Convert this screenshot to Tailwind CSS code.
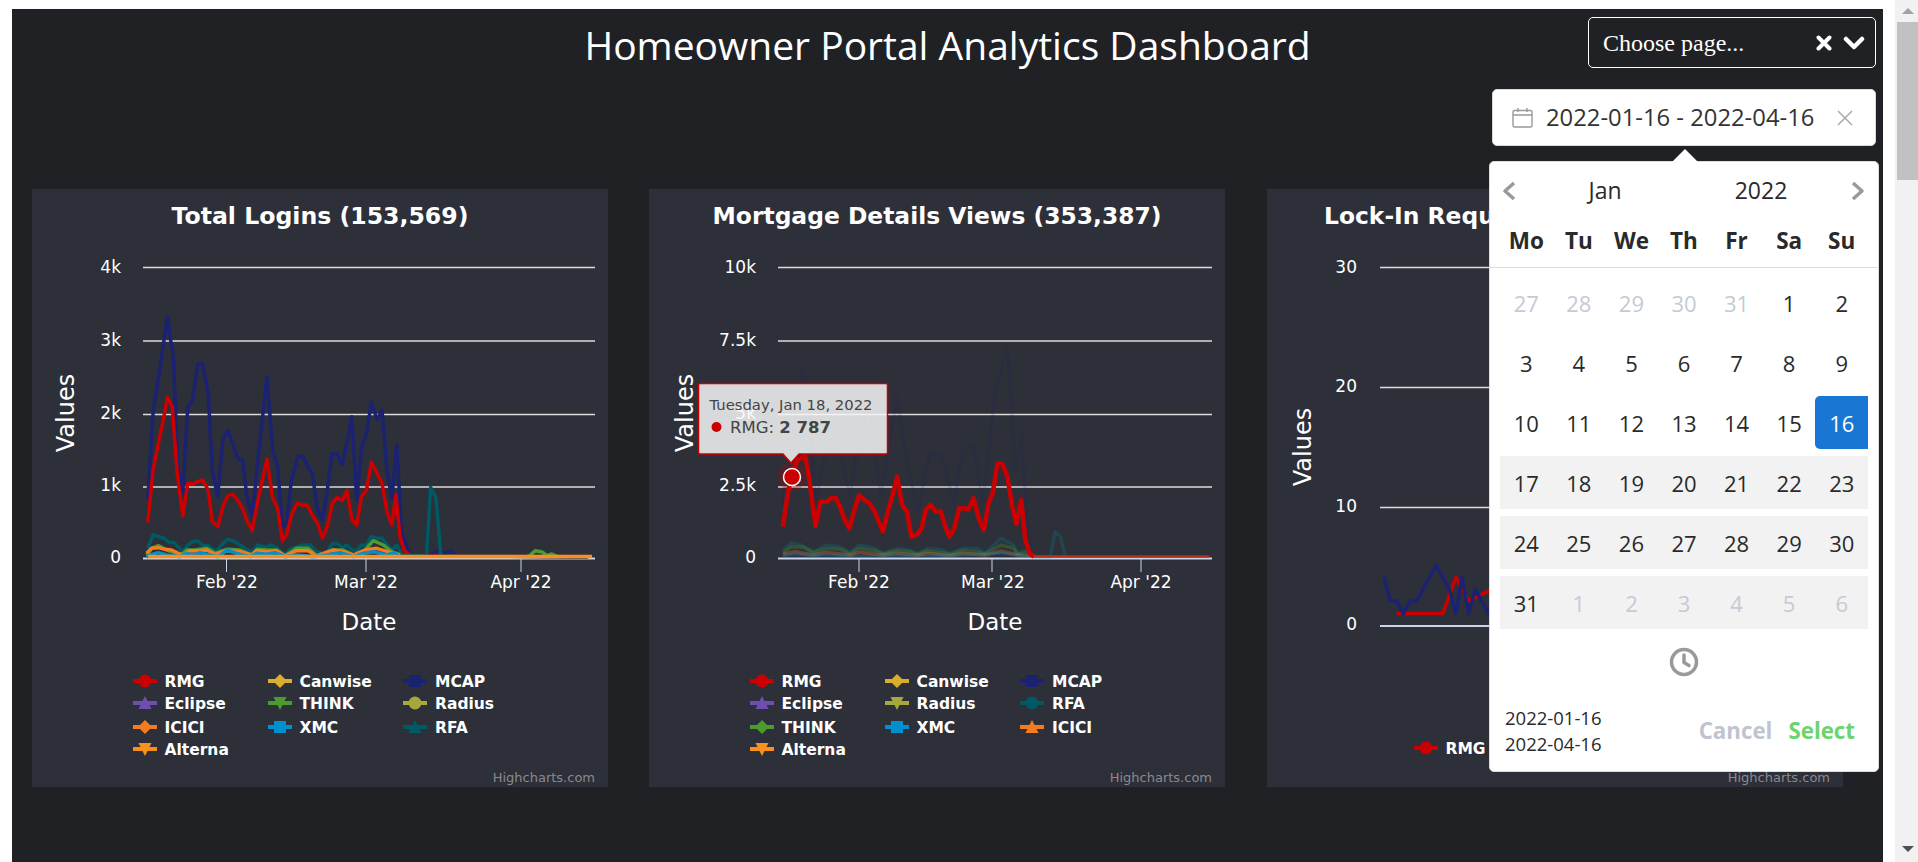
<!DOCTYPE html>
<html lang="en">
<head>
<meta charset="utf-8">
<title>Homeowner Portal Analytics Dashboard</title>
<script src="https://cdn.jsdelivr.net/npm/@tailwindcss/browser@4"></script>
</head>
<body class="overflow-hidden bg-white">
<div class="flex h-[862px] w-[1918px] overflow-hidden bg-white">
  <main class="relative mt-[9px] ml-[12px] h-[853px] w-[1871px] shrink-0 bg-[#202125]">
    <header class="grid h-[59px] grid-cols-[1fr_auto_1fr] items-start pt-[8px] pr-[7px] pl-[7px]">
      <div></div>
      <h1 class="mt-[3px] font-['Open_Sans',sans-serif] text-[39px] leading-[50px] font-normal text-white">Homeowner Portal Analytics Dashboard</h1>
      <div class="flex justify-end">
        <div class="flex h-[51px] w-[288px] items-center justify-between rounded-[5px] border border-white pr-[10px] pl-[14px] font-['Liberation_Serif',serif] text-[24px] text-white">
          <span>Choose page...</span>
          <span class="flex items-center gap-[11px]">
            <svg width="16" height="16" viewBox="0 0 16 16" fill="none" stroke="#fff" stroke-width="4" stroke-linecap="round"><path d="M2.5 2.5 13.5 13.5M13.5 2.5 2.5 13.5"/></svg>
            <svg width="22" height="16" viewBox="0 0 22 16" fill="none" stroke="#fff" stroke-width="4.5" stroke-linecap="round" stroke-linejoin="round"><path d="M3 4l8 8 8-8"/></svg>
          </span>
        </div>
      </div>
    </header>

    <div class="mt-[21px] flex justify-end pr-[7px]">
      <div class="flex h-[57px] w-[384px] items-center rounded-[5px] border border-[#d9d9d9] bg-white pl-[19px] font-['Open_Sans',sans-serif] text-[#333]">
        <svg width="21" height="21" viewBox="0 0 21 21" fill="none" stroke="#999" stroke-width="1.4"><rect x="1" y="3.5" width="19" height="16.5" rx="1.5"/><path d="M1 8h19M6 1v4M15 1v4"/></svg>
        <span class="ml-[13px] w-[267px] text-[23.8px] leading-none whitespace-nowrap">2022-01-16 - 2022-04-16</span>
        <svg class="ml-[24px]" width="16" height="16" viewBox="0 0 16 16" fill="none" stroke="#aaa" stroke-width="1.5"><path d="M1 1l14 14M15 1 1 15"/></svg>
      </div>
    </div>

    <section class="mt-[43px] flex gap-[41px] pl-[20px] font-['DejaVu_Sans',sans-serif]">
      <!-- Chart 1 -->
      <article class="h-[598px] w-[576px] shrink-0 bg-[#2d2f39]">
        <svg class="block" width="576" height="598" viewBox="32 189 576 598" fill="none">
          <defs>
            <circle id="m-circle" r="6.5"/>
            <rect id="m-square" x="-6" y="-6" width="12" height="12"/>
            <path id="m-diamond" d="M0-7 7 0 0 7-7 0Z"/>
            <path id="m-up" d="M0-7 6.5 6H-6.5Z"/>
            <path id="m-down" d="M0 7 6.5-6H-6.5Z"/>
          </defs>
          <text x="320" y="224" text-anchor="middle" class="fill-white text-[23.6px] font-bold">Total Logins (153,569)</text>
          <g stroke="#dcdcdc" stroke-width="1.5">
            <path d="M143 267.5H595M143 341H595M143 414.5H595M143 487H595"/>
          </g>
          <path d="M143 558.5H595" stroke="#ccd6eb" stroke-width="2"/>
          <path d="M226.5 558V572M366 558V572M521 558V572" stroke="#ccd6eb"/>
          <g class="fill-white text-[17px]" text-anchor="end">
            <text x="121" y="273">4k</text><text x="121" y="346">3k</text><text x="121" y="419">2k</text><text x="121" y="491">1k</text><text x="121" y="563">0</text>
          </g>
          <g class="fill-white text-[17px]" text-anchor="middle">
            <text x="227" y="588">Feb '22</text><text x="366" y="588">Mar '22</text><text x="521" y="588">Apr '22</text>
          </g>
          <text transform="translate(74 413) rotate(-90)" text-anchor="middle" class="fill-white text-[24px]">Values</text>
          <text x="369" y="630" text-anchor="middle" class="fill-white text-[23px]">Date</text>

          <g transform="translate(0 170) scale(.40816 .33333)" stroke-linejoin="round">
            <polyline vector-effect="non-scaling-stroke" stroke="#1c2272" stroke-width="3.5" points="362,990 375,730 390,610 410,440 425,570 436,900 448,970 460,710 472,690 484,585 496,580 510,670 520,900 533,980 546,810 558,782 570,820 582,865 594,870 606,990 618,1040 632,870 654,620 668,840 680,890 692,1070 702,1060 714,930 730,860 742,858 752,885 765,910 778,1020 790,1050 802,960 814,850 826,852 838,885 850,820 862,740 874,990 886,830 898,790 910,697 924,750 936,720 948,900 960,985 972,825 984,1090 1000,1140 1012,1158 1050,1158 1075,1140 1090,1150 1105,1143 1120,1158 1440,1160"/>
            <polyline vector-effect="non-scaling-stroke" stroke="#cc0000" stroke-width="3.5" points="362,1058 375,900 388,820 400,750 410,683 422,710 434,910 448,1037 460,940 472,942 484,935 496,930 510,960 520,1055 534,1070 546,1010 558,978 570,972 582,990 594,1015 606,1055 618,1082 632,990 654,868 668,985 680,1015 692,1112 702,1095 714,1035 728,1000 740,1005 752,1005 765,1035 778,1060 790,1105 802,1070 814,1000 826,982 838,992 850,962 862,1048 874,1065 886,978 898,960 910,877 924,910 936,940 948,1025 960,1065 970,975 980,1100 990,1140 1005,1158 1440,1160"/>
            <polyline vector-effect="non-scaling-stroke" stroke="#005a66" stroke-width="3.5" points="362,1135 375,1095 388,1100 400,1103 415,1118 425,1117 436,1130 448,1145 460,1125 472,1115 484,1113 496,1125 510,1127 522,1140 534,1140 546,1120 558,1108 570,1112 582,1120 594,1130 606,1140 618,1145 632,1125 645,1130 654,1130 665,1125 680,1135 692,1150 702,1150 714,1135 730,1130 742,1125 760,1125 775,1145 790,1150 802,1145 814,1122 826,1120 838,1132 850,1125 862,1140 874,1142 886,1125 898,1125 910,1100 924,1105 936,1105 948,1125 960,1140 972,1125 984,1155 1045,1158 1055,952 1068,982 1080,1158 1440,1160"/>
            <polyline vector-effect="non-scaling-stroke" stroke="#4c9b2f" stroke-width="3.5" points="1295,1160 1312,1142 1328,1146 1340,1156 1352,1152 1365,1159"/>
          </g>
          <g transform="translate(100 500) scale(.33333)" stroke-linejoin="round">
            <polyline vector-effect="non-scaling-stroke" stroke="#4c9b2f" stroke-width="3.5" points="140,165 155,145 175,137 200,150 225,158 245,165 260,150 285,150 320,145 345,160 380,148 420,150 455,165 472,148 500,150 530,150 555,168 590,145 625,145 650,168 700,150 730,150 760,165 795,150 820,122 850,135 875,155 900,165"/>
            <polyline vector-effect="non-scaling-stroke" stroke="#f47b20" stroke-width="3.5" points="140,160 155,145 175,143 195,148 215,150 235,160 250,165 270,152 300,153 320,150 345,163 380,152 420,155 455,165 470,152 500,155 530,153 555,168 590,152 625,152 650,168 700,150 730,155 760,165 795,150 830,145 870,157 900,165"/>
            <polyline vector-effect="non-scaling-stroke" stroke="#0090d0" stroke-width="3.5" points="140,172 150,165 175,158 200,165 240,170 260,160 280,165 300,158 330,165 355,170 382,150 410,160 450,170 470,160 500,163 525,158 555,170 590,165 640,170 680,165 720,158 760,170 790,160 820,155 860,165 885,158 900,172"/>
          </g>
          <path d="M148 556.5H592" stroke="#f9901e" stroke-width="3.5"/>

          <!-- legend 1 -->
          <g stroke-width="4">
            <g transform="translate(145 681)"><path d="M-12 0H12" stroke="#cc0000"/><use href="#m-circle" fill="#cc0000"/></g>
            <g transform="translate(145 703)"><path d="M-12 0H12" stroke="#6c4fae"/><use href="#m-up" fill="#6c4fae"/></g>
            <g transform="translate(145 727)"><path d="M-12 0H12" stroke="#f47b20"/><use href="#m-diamond" fill="#f47b20"/></g>
            <g transform="translate(145 749)"><path d="M-12 0H12" stroke="#f9901e"/><use href="#m-down" fill="#f9901e"/></g>
            <g transform="translate(280 681)"><path d="M-12 0H12" stroke="#d9ae2c"/><use href="#m-diamond" fill="#d9ae2c"/></g>
            <g transform="translate(280 703)"><path d="M-12 0H12" stroke="#4c9b2f"/><use href="#m-down" fill="#4c9b2f"/></g>
            <g transform="translate(280 727)"><path d="M-12 0H12" stroke="#0090d0"/><use href="#m-square" fill="#0090d0"/></g>
            <g transform="translate(415 681)"><path d="M-12 0H12" stroke="#1c2272"/><use href="#m-square" fill="#1c2272"/></g>
            <g transform="translate(415 703)"><path d="M-12 0H12" stroke="#a5a83b"/><use href="#m-circle" fill="#a5a83b"/></g>
            <g transform="translate(415 727)"><path d="M-12 0H12" stroke="#005a66"/><use href="#m-up" fill="#005a66"/></g>
          </g>
          <g class="fill-white text-[15.5px] font-bold">
            <text x="164.5" y="687">RMG</text><text x="164.5" y="709">Eclipse</text><text x="164.5" y="733">ICICI</text><text x="164.5" y="755">Alterna</text>
            <text x="299.5" y="687">Canwise</text><text x="299.5" y="709">THINK</text><text x="299.5" y="733">XMC</text>
            <text x="435" y="687">MCAP</text><text x="435" y="709">Radius</text><text x="435" y="733">RFA</text>
          </g>
          <text x="595" y="782" text-anchor="end" class="fill-[#8a8a8e] text-[13px]">Highcharts.com</text>
        </svg>
      </article>

      <!-- Chart 2 -->
      <article class="h-[598px] w-[576px] shrink-0 bg-[#2d2f39]">
        <svg class="block" width="576" height="598" viewBox="649 189 576 598" fill="none">
          <text x="937" y="224" text-anchor="middle" class="fill-white text-[23.4px] font-bold">Mortgage Details Views (353,387)</text>
          <g stroke="#dcdcdc" stroke-width="1.5">
            <path d="M778 267.5H1212M778 341H1212M778 414.5H1212M778 487H1212"/>
          </g>
          <path d="M778 558.5H1212" stroke="#ccd6eb" stroke-width="2"/>
          <path d="M859 558V572M992 558V572M1141 558V572" stroke="#ccd6eb"/>
          <g class="fill-white text-[17px]" text-anchor="end">
            <text x="756" y="273">10k</text><text x="756" y="346">7.5k</text><text x="756" y="419">5k</text><text x="756" y="491">2.5k</text><text x="756" y="563">0</text>
          </g>
          <g class="fill-white text-[17px]" text-anchor="middle">
            <text x="859" y="588">Feb '22</text><text x="993" y="588">Mar '22</text><text x="1141" y="588">Apr '22</text>
          </g>
          <text transform="translate(693 413) rotate(-90)" text-anchor="middle" class="fill-white text-[24px]">Values</text>
          <text x="995" y="630" text-anchor="middle" class="fill-white text-[23px]">Date</text>

          <g transform="translate(640 170) scale(.40816 .33333)" stroke-linejoin="round">
            <polyline vector-effect="non-scaling-stroke" stroke="#1c2272" stroke-opacity=".14" stroke-width="3" points="350,1000 375,800 398,590 415,700 430,1000 450,870 480,800 515,980 530,850 560,700 590,980 630,680 650,850 680,1020 710,850 740,860 770,1000 790,840 817,830 840,1000 870,670 900,530 920,900 935,800 950,1100 965,1160"/>
            <polyline vector-effect="non-scaling-stroke" stroke="#00838f" stroke-opacity=".25" stroke-width="3.5" points="350,1140 372,1118 395,1125 425,1145 455,1125 490,1130 515,1148 537,1125 575,1135 595,1150 630,1135 660,1140 680,1150 705,1135 740,1140 760,1150 790,1135 825,1135 845,1150 885,1105 915,1125 925,1150 945,1140 965,1160 1005,1160 1017,1085 1030,1100 1042,1160"/>
            <polyline vector-effect="non-scaling-stroke" stroke="#4c9b2f" stroke-opacity=".3" stroke-width="3.5" points="350,1148 372,1130 400,1132 425,1148 455,1135 490,1138 515,1152 537,1135 575,1142 595,1152 630,1142 660,1145 680,1153 705,1143 740,1148 760,1153 790,1142 825,1145 845,1152 885,1125 915,1135 925,1152 945,1148 965,1160"/>
            <polyline vector-effect="non-scaling-stroke" stroke="#f47b20" stroke-opacity=".3" stroke-width="3.5" points="350,1153 380,1145 425,1155 455,1147 515,1156 537,1147 595,1156 630,1150 680,1156 705,1150 760,1157 790,1150 845,1156 885,1143 925,1155 965,1160"/>
            <polyline vector-effect="non-scaling-stroke" stroke="#0090d0" stroke-opacity=".3" stroke-width="3" points="350,1158 380,1152 425,1158 455,1154 515,1159 595,1159 630,1155 680,1159 790,1155 885,1150 965,1160"/>
            <polyline vector-effect="non-scaling-stroke" stroke="#cc0000" stroke-width="4.5" points="350,1070 362,970 372,920 385,870 405,860 415,930 430,1068 442,995 458,995 468,985 480,985 490,1010 500,1045 513,1075 525,1020 537,975 550,990 562,1000 575,1025 585,1055 595,1085 607,1025 620,970 630,920 642,1005 654,1025 665,1100 678,1095 690,1075 700,1020 712,1005 725,1025 737,1025 748,1070 758,1100 770,1075 782,1015 795,1015 805,1018 817,985 830,1045 842,1080 854,1000 864,970 876,880 888,882 900,920 912,1010 922,1062 934,990 944,1110 955,1150 965,1160"/>
          </g>
          <path d="M1034 556.5H1209" stroke="#b5331a" stroke-width="2.5"/>
          <!-- hover marker -->
          <circle cx="792" cy="477" r="14" fill="#cc0000" fill-opacity=".25"/>
          <circle cx="792" cy="477" r="8.5" fill="#cc0000" stroke="#fff" stroke-width="1.5"/>
          <!-- tooltip -->
          <path d="M700 383.5H886Q887.5 383.5 887.5 385V452.5Q887.5 454 886 454H799L791 463 783 454H700Q698.5 454 698.5 452.5V385Q698.5 383.5 700 383.5Z" fill="#f7f7f7" fill-opacity=".85" stroke="#cc0000" stroke-width="1.5"/>
          <text x="709.5" y="410" class="fill-[#444] text-[14.8px]">Tuesday, Jan 18, 2022</text>
          <circle cx="716.5" cy="427" r="5" fill="#cc0000"/>
          <text x="730" y="433" class="fill-[#444] text-[16.5px]">RMG: <tspan class="font-bold">2 787</tspan></text>

          <!-- legend 2 -->
          <g stroke-width="4">
            <g transform="translate(762 681)"><path d="M-12 0H12" stroke="#cc0000"/><use href="#m-circle" fill="#cc0000"/></g>
            <g transform="translate(762 703)"><path d="M-12 0H12" stroke="#6c4fae"/><use href="#m-up" fill="#6c4fae"/></g>
            <g transform="translate(762 727)"><path d="M-12 0H12" stroke="#4c9b2f"/><use href="#m-diamond" fill="#4c9b2f"/></g>
            <g transform="translate(762 749)"><path d="M-12 0H12" stroke="#f9901e"/><use href="#m-down" fill="#f9901e"/></g>
            <g transform="translate(897 681)"><path d="M-12 0H12" stroke="#d9ae2c"/><use href="#m-diamond" fill="#d9ae2c"/></g>
            <g transform="translate(897 703)"><path d="M-12 0H12" stroke="#a5a83b"/><use href="#m-down" fill="#a5a83b"/></g>
            <g transform="translate(897 727)"><path d="M-12 0H12" stroke="#0090d0"/><use href="#m-square" fill="#0090d0"/></g>
            <g transform="translate(1032 681)"><path d="M-12 0H12" stroke="#1c2272"/><use href="#m-square" fill="#1c2272"/></g>
            <g transform="translate(1032 703)"><path d="M-12 0H12" stroke="#005a66"/><use href="#m-circle" fill="#005a66"/></g>
            <g transform="translate(1032 727)"><path d="M-12 0H12" stroke="#f47b20"/><use href="#m-up" fill="#f47b20"/></g>
          </g>
          <g class="fill-white text-[15.5px] font-bold">
            <text x="781.5" y="687">RMG</text><text x="781.5" y="709">Eclipse</text><text x="781.5" y="733">THINK</text><text x="781.5" y="755">Alterna</text>
            <text x="916.5" y="687">Canwise</text><text x="916.5" y="709">Radius</text><text x="916.5" y="733">XMC</text>
            <text x="1052" y="687">MCAP</text><text x="1052" y="709">RFA</text><text x="1052" y="733">ICICI</text>
          </g>
          <text x="1212" y="782" text-anchor="end" class="fill-[#8a8a8e] text-[13px]">Highcharts.com</text>
        </svg>
      </article>

      <!-- Chart 3 -->
      <article class="ml-[1px] h-[598px] w-[576px] shrink-0 bg-[#2d2f39]">
        <svg class="block" width="576" height="598" viewBox="1267 189 576 598" fill="none">
          <text x="1324" y="224" class="fill-white text-[23.4px] font-bold">Lock-In Requests (1,284)</text>
          <g stroke="#dcdcdc" stroke-width="1.5">
            <path d="M1380 267.5H1830M1380 387.5H1830M1380 507.5H1830"/>
          </g>
          <path d="M1380 626H1830" stroke="#ccd6eb" stroke-width="2"/>
          <g class="fill-white text-[17px]" text-anchor="end">
            <text x="1357" y="273">30</text><text x="1357" y="392">20</text><text x="1357" y="512">10</text><text x="1357" y="630">0</text>
          </g>
          <text transform="translate(1311 447) rotate(-90)" text-anchor="middle" class="fill-white text-[24px]">Values</text>
          <g transform="translate(1240 180) scale(.33333 .39526)" stroke-linejoin="round">
            <polyline vector-effect="non-scaling-stroke" stroke="#cc0000" stroke-width="3.5" points="470,1097 608,1097 648,1005 686,1065 745,1040 800,1030"/>
            <polyline vector-effect="non-scaling-stroke" stroke="#1c2272" stroke-width="3.5" points="432,1003 450,1065 470,1065 490,1097 510,1065 530,1065 588,975 628,1035 648,1097 666,1005 686,1097 706,1035 745,1097 800,1065"/>
          </g>
          <g stroke-width="4"><g transform="translate(1426 748)"><path d="M-12 0H12" stroke="#cc0000"/><use href="#m-circle" fill="#cc0000"/></g></g>
          <text x="1445.5" y="754" class="fill-white text-[15.5px] font-bold">RMG</text>
          <text x="1830" y="782" text-anchor="end" class="fill-[#8a8a8e] text-[13px]">Highcharts.com</text>
        </svg>
      </article>
    </section>

    <!-- Date picker popup -->
    <div class="absolute top-[152px] left-[1477px] h-[611px] w-[390px] rounded-[5px] border border-[#ddd] bg-white font-['Open_Sans',sans-serif] text-[#2a2a2a]">
      <svg class="absolute top-[-13px] left-[181px]" width="28" height="14" viewBox="0 0 28 14"><path d="M0 14 14 0 28 14Z" fill="#fff"/></svg>
      <div class="flex h-[57px] items-center pl-[10px] text-[23px]">
        <svg width="20" height="22" viewBox="0 0 20 22" fill="none" stroke="#999" stroke-width="3.5" stroke-linejoin="round"><path d="M14 3 5 11l9 8"/></svg>
        <span class="w-[170px] text-center">Jan</span>
        <span class="w-[142px] text-center">2022</span>
        <svg class="ml-[15px]" width="20" height="22" viewBox="0 0 20 22" fill="none" stroke="#999" stroke-width="3.5" stroke-linejoin="round"><path d="M6 3l9 8-9 8"/></svg>
      </div>
      <div class="grid h-[49px] grid-cols-7 border-b border-[#ddd] px-[10px] pb-[6px] text-center text-[22.5px] leading-[43px] font-bold">
        <span>Mo</span><span>Tu</span><span>We</span><span>Th</span><span>Fr</span><span>Sa</span><span>Su</span>
      </div>
      <div class="mt-[8px] grid auto-rows-[53px] grid-cols-7 gap-y-[7px] px-[10px] text-center text-[22px] leading-[54px]">
        <span class="text-[#c5cad5]">27</span><span class="text-[#c5cad5]">28</span><span class="text-[#c5cad5]">29</span><span class="text-[#c5cad5]">30</span><span class="text-[#c5cad5]">31</span><span>1</span><span>2</span>
        <span>3</span><span>4</span><span>5</span><span>6</span><span>7</span><span>8</span><span>9</span>
        <span>10</span><span>11</span><span>12</span><span>13</span><span>14</span><span>15</span><span class="rounded-l-[5px] bg-[#1976d2] text-white">16</span>
        <span class="bg-[#f2f2f2]">17</span><span class="bg-[#f2f2f2]">18</span><span class="bg-[#f2f2f2]">19</span><span class="bg-[#f2f2f2]">20</span><span class="bg-[#f2f2f2]">21</span><span class="bg-[#f2f2f2]">22</span><span class="bg-[#f2f2f2]">23</span>
        <span class="bg-[#f2f2f2]">24</span><span class="bg-[#f2f2f2]">25</span><span class="bg-[#f2f2f2]">26</span><span class="bg-[#f2f2f2]">27</span><span class="bg-[#f2f2f2]">28</span><span class="bg-[#f2f2f2]">29</span><span class="bg-[#f2f2f2]">30</span>
        <span class="bg-[#f2f2f2]">31</span><span class="bg-[#f2f2f2] text-[#c5cad5]">1</span><span class="bg-[#f2f2f2] text-[#c5cad5]">2</span><span class="bg-[#f2f2f2] text-[#c5cad5]">3</span><span class="bg-[#f2f2f2] text-[#c5cad5]">4</span><span class="bg-[#f2f2f2] text-[#c5cad5]">5</span><span class="bg-[#f2f2f2] text-[#c5cad5]">6</span>
      </div>
      <div class="flex h-[66px] items-center justify-center">
        <svg width="30" height="30" viewBox="0 0 30 30" fill="none" stroke="#999" stroke-width="3.5" stroke-linecap="round" stroke-linejoin="round"><circle cx="15" cy="15" r="12.5"/><path d="M15 8v7.5l5 3"/></svg>
      </div>
      <div class="flex items-start justify-between pt-[10px] pr-[23px] pl-[15px]">
        <div class="text-[18.5px] leading-[26px]"><div>2022-01-16</div><div>2022-04-16</div></div>
        <div class="mt-[11px] flex gap-[16px] text-[22.3px] leading-[30px] font-bold">
          <span class="text-[#c0c4cf]">Cancel</span><span class="text-[#6dd36d]">Select</span>
        </div>
      </div>
    </div>
  </main>
  <div class="w-[12px] shrink-0 bg-white"></div>
  <aside class="relative flex w-[23px] shrink-0 flex-col items-end bg-[#f1f1f1]">
    <div class="flex h-[22px] w-[21px] items-center justify-center"><div class="h-0 w-0 border-x-[6px] border-b-[6px] border-x-transparent border-b-[#a3a3a3]"></div></div>
    <div class="h-[158px] w-[21px] bg-[#c1c1c1]"></div>
    <div class="flex-1"></div>
    <div class="flex h-[26px] w-[21px] items-center justify-center"><div class="h-0 w-0 border-x-[6px] border-t-[6px] border-x-transparent border-t-[#505050]"></div></div>
  </aside>
</div>
</body>
</html>
